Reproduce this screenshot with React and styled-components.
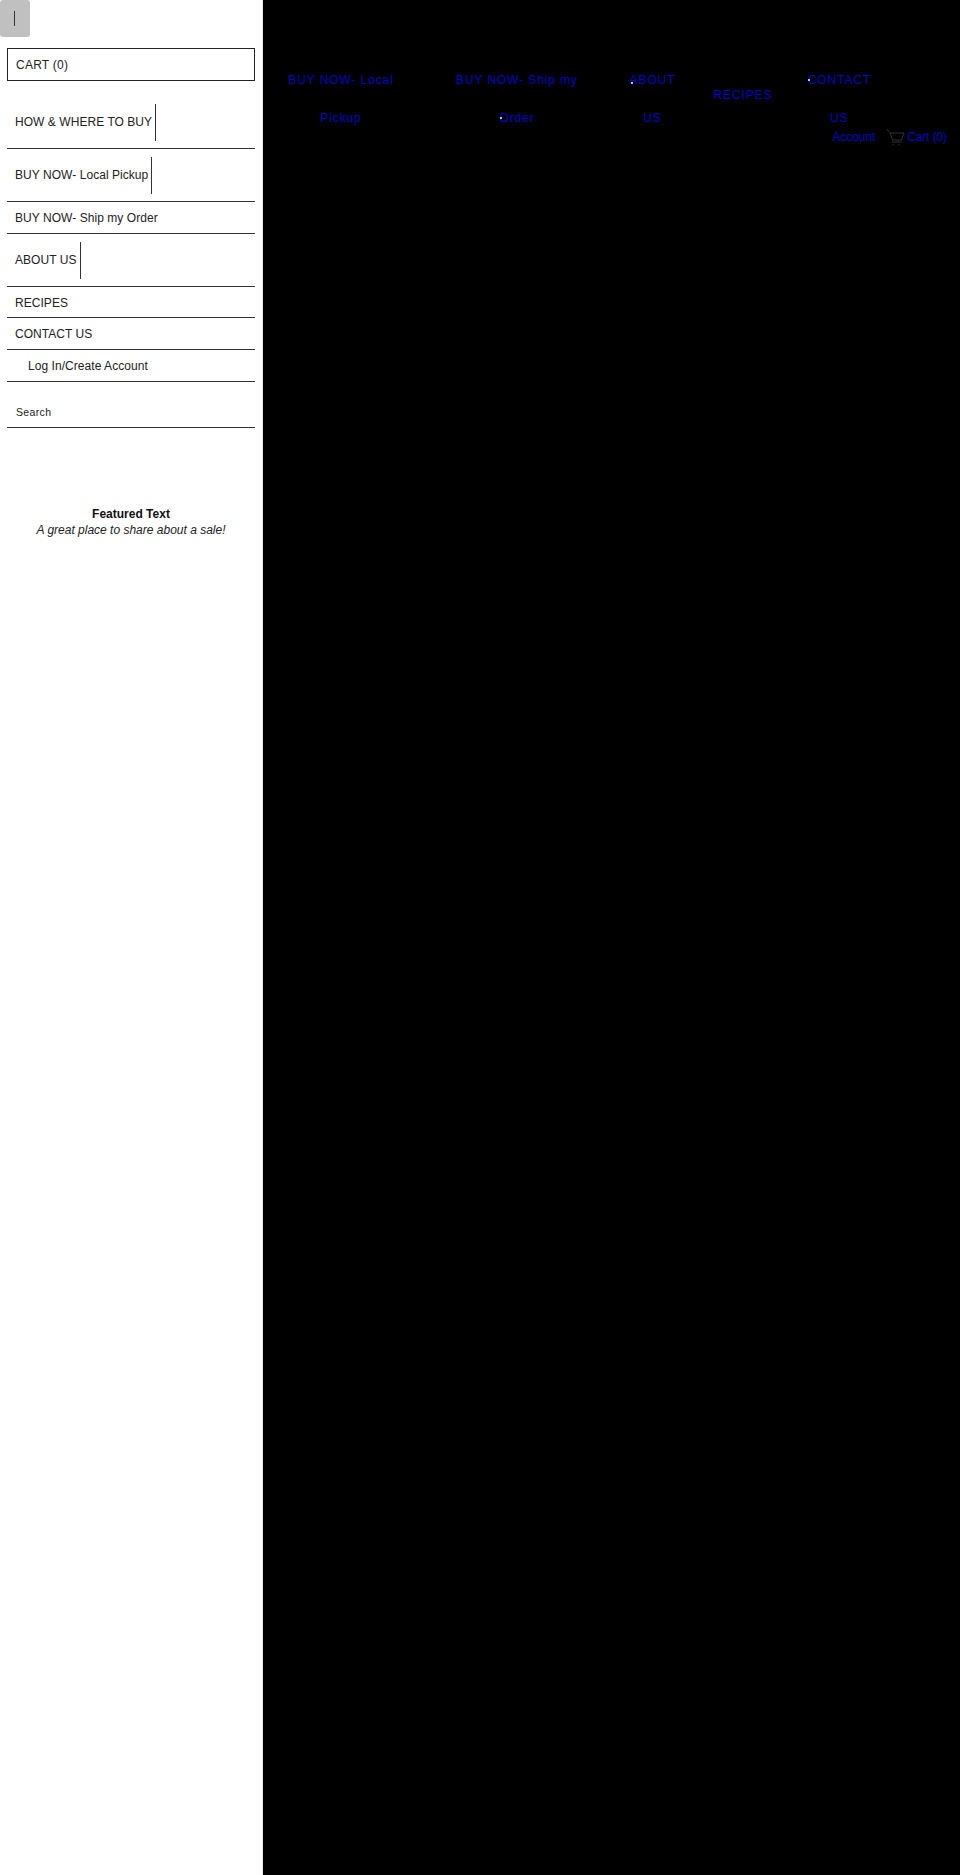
import React from 'react';
import styled, { createGlobalStyle } from 'styled-components';

const Global = createGlobalStyle`
  html, body { margin: 0; padding: 0; background: #000; }
  body { font-family: "Liberation Sans", Arial, sans-serif; }
  * { box-sizing: border-box; }
`;

const Page = styled.div`
  display: flex;
  width: 960px;
  height: 1875px;
  overflow: hidden;
  background: #000;
`;

const Sidebar = styled.aside`
  width: 263px;
  flex: none;
  background: #fff;
  border-right: 1px solid #e6e6e6;
  padding: 0 7px;
  color: #222;
  font-size: 12px;
`;

const Toggle = styled.button`
  display: flex;
  align-items: center;
  justify-content: center;
  width: 30px;
  height: 37px;
  margin: 0 0 11px -7px;
  padding: 0;
  border: 0;
  border-radius: 3px;
  background: #c0c0c0;

  &::before {
    content: '';
    width: 1px;
    height: 15px;
    background: #333;
    margin-left: -2px;
  }
`;

const CartBox = styled.div`
  height: 33px;
  width: 248px;
  margin-bottom: 14.4px;
  padding: 1px 0 0 8px;
  border: 1px solid #222;
  letter-spacing: 0.25px;
  line-height: 31px;
`;

const MenuRow = styled.div`
  display: flex;
  align-items: center;
  width: 248px;
  height: ${(p) => (p.$tall ? '53.3px' : '31.6px')};
  padding: ${(p) => (p.$tall ? '0' : '1px')} 0 0 ${(p) => (p.$indent ? '21px' : '8px')};
  border-bottom: 1px solid #333;
  letter-spacing: 0.05px;
  white-space: nowrap;
`;

const Caret = styled.span`
  width: 1px;
  height: 37px;
  margin: 2px 0 0 3px;
  background: #333;
`;

const Search = styled.div`
  width: 248px;
  height: 46px;
  padding: 22px 0 0 9px;
  border-bottom: 1px solid #333;
  font-size: 10.5px;
  letter-spacing: 0.35px;
  line-height: 16px;
`;

const Featured = styled.div`
  margin-top: 78.5px;
  width: 248px;
  text-align: center;
  line-height: 16px;

  strong { display: block; color: #111; }
  em { display: block; }
`;

const Main = styled.main`
  flex: 1;
  padding-top: 61px;
`;

const Nav = styled.ul`
  display: flex;
  align-items: flex-start;
  list-style: none;
  margin: 0;
  padding: 0;
`;

const NavItem = styled.li`
  position: relative;
  width: ${(p) => p.$w}px;
  margin-left: ${(p) => p.$gap}px;
  padding-top: ${(p) => p.$drop || 0}px;
  text-align: center;
  white-space: nowrap;
  color: #0000c8;
  font-size: 12px;
  line-height: 38px;
  letter-spacing: 0.9px;
`;

const Dot = styled.i`
  position: absolute;
  left: ${(p) => p.$x}px;
  top: ${(p) => p.$y}px;
  width: 2px;
  height: 2px;
  border-radius: 50%;
  background: #fff;
`;

const AccountRow = styled.div`
  display: flex;
  justify-content: flex-end;
  align-items: center;
  height: 20px;
  margin-top: -10.5px;
  padding-right: 13px;
  color: #0000c8;
  font-size: 12px;
  letter-spacing: -0.1px;
`;

const CartIcon = styled.svg`
  width: 19px;
  height: 18px;
  margin: 0 2px 0 11px;
  fill: none;
  stroke: #333;
  stroke-width: 1;
`;

const menu = [
  { label: 'HOW & WHERE TO BUY', tall: true },
  { label: 'BUY NOW- Local Pickup', tall: true },
  { label: 'BUY NOW- Ship my Order' },
  { label: 'ABOUT US', tall: true },
  { label: 'RECIPES' },
  { label: 'CONTACT US' },
  { label: 'Log In/Create Account', indent: true },
];

export default function App() {
  return (
    <Page>
      <Global />
      <Sidebar>
        <Toggle aria-label="Menu" />
        <CartBox>CART (0)</CartBox>
        {menu.map((item) => (
          <MenuRow key={item.label} $tall={item.tall} $indent={item.indent}>
            {item.label}
            {item.tall && <Caret />}
          </MenuRow>
        ))}
        <Search>Search</Search>
        <Featured>
          <strong>Featured Text</strong>
          <em>A great place to share about a sale!</em>
        </Featured>
      </Sidebar>
      <Main>
        <Nav>
          <NavItem $w={130} $gap={13}>
            BUY NOW- Local<br />Pickup
          </NavItem>
          <NavItem $w={140} $gap={41}>
            BUY NOW- Ship my<br />Order
            <Dot $x={53} $y={56} />
          </NavItem>
          <NavItem $w={60} $gap={35.5}>
            ABOUT<br />US
            <Dot $x={8} $y={21} />
          </NavItem>
          <NavItem $w={70} $gap={25.5} $drop={15}>RECIPES</NavItem>
          <NavItem $w={80} $gap={21.5}>
            CONTACT<br />US
            <Dot $x={8} $y={18} />
          </NavItem>
        </Nav>
        <AccountRow>
          Account
          <CartIcon viewBox="0 0 19 18">
            <path d="M1 1l3 4h14l-2.500 7H6.500L4 5" />
            <path d="M6 14h10" />
            <path d="M7 16v1.500M13 16v1.500" />
          </CartIcon>
          Cart (0)
        </AccountRow>
      </Main>
    </Page>
  );
}
